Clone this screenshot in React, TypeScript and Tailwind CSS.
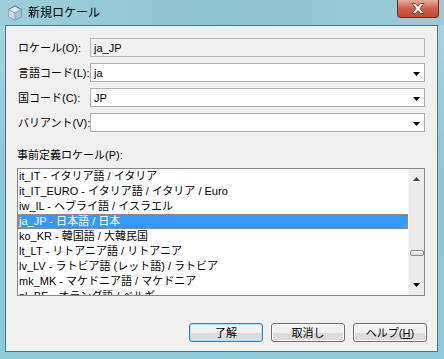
import React from 'react';

const font = "font-['Liberation_Sans','Noto_Sans_CJK_JP',sans-serif]";

const items = [
  'it_IT - イタリア語 / イタリア',
  'it_IT_EURO - イタリア語 / イタリア / Euro',
  'iw_IL - ヘブライ語 / イスラエル',
  'ja_JP - 日本語 / 日本',
  'ko_KR - 韓国語 / 大韓民国',
  'lt_LT - リトアニア語 / リトアニア',
  'lv_LV - ラトビア語 (レット語) / ラトビア',
  'mk_MK - マケドニア語 / マケドニア',
  'nl_BE - オランダ語 / ベルギー',
];

function Arrow() {
  return (
    <svg width="7" height="4" viewBox="0 0 7 4" className="block">
      <path d="M0 0 H7 L3.5 4 Z" fill="#000" />
    </svg>
  );
}

function Field({ value, combo }: { value: string; combo?: boolean }) {
  return (
    <div
      className={`h-[19px] flex items-center border ${combo ? 'bg-white border-[#abadb3]' : 'bg-[#f0f0f0] border-[#b5b5b5]'}`}
    >
      <span className="flex-1 pl-[3px] text-[11px] leading-[14px] text-black">{value}</span>
      {combo && (
        <div className="pr-[4px] pt-[2px]">
          <Arrow />
        </div>
      )}
    </div>
  );
}

function Button({ label, primary }: { label: React.ReactNode; primary?: boolean }) {
  return (
    <div
      className={`w-[74px] h-[19px] rounded-[3px] border flex items-center justify-center text-[11px] leading-[14px] text-black bg-gradient-to-b from-[#f2f2f2] from-50% to-[#dcdcdc] to-50% ${
        primary ? 'border-[#3c7fb1] shadow-[inset_0_0_0_1px_#a7e3f6]' : 'border-[#707070] shadow-[inset_0_0_0_1px_#fcfcfc]'
      }`}
    >
      {label}
    </div>
  );
}

const lbl = 'text-[11px] leading-[14px] whitespace-nowrap';

export default function App() {
  return (
    <div className={`w-[444px] h-[359px] flex flex-col bg-gradient-to-b from-[#a8d6e1] via-[#8fc7d4] to-[#8ccbd8] ${font}`}>
      {/* title bar */}
      <div className="h-[25px] shrink-0 flex items-start bg-gradient-to-r from-[#9ccfdb] via-[#8ec3d0] to-[#9ccbd8]">
        <svg width="16" height="16" viewBox="0 0 16 16" className="ml-[7px] mt-[5px]">
          <path d="M8 1 L14.5 4.5 V11.5 L8 15 L1.5 11.5 V4.5 Z" fill="#dfeaf3" stroke="#5f6f80" strokeWidth="1" />
          <path d="M8 8 L14.5 4.5 V11.5 L8 15 Z" fill="#a9c3d9" />
          <path d="M1.5 4.5 L8 8 V15 L1.5 11.5 Z" fill="#c9dcec" />
          <path d="M1.5 4.5 L8 8 L14.5 4.5" fill="none" stroke="#8a9aab" strokeWidth="1" />
          <path d="M8 8 V15" stroke="#8a9aab" strokeWidth="1" />
        </svg>
        <span className="ml-[5px] mt-[5px] text-[12px] leading-[16px] text-black">新規ロケール</span>
        <div className="ml-auto mr-[5px] w-[42px] h-[18px] rounded-b-[4px] border border-t-0 border-[#6a2a22] bg-gradient-to-b from-[#e9a99c] via-[#d0604c] to-[#c24b33] flex items-center justify-center">
          <svg width="14" height="11" viewBox="0 0 14 11">
            <path d="M1 0.5 H4.5 L7 3.5 L9.5 0.5 H13 L9 5.5 L13 10.5 H9.5 L7 7.5 L4.5 10.5 H1 L5 5.5 Z" fill="#fff" stroke="#5a2a24" strokeWidth="0.8" />
          </svg>
        </div>
      </div>

      {/* client */}
      <div className="ml-[5px] mr-[6px] h-[327px] shrink-0 border border-[#4e7784] bg-[#f0f0f0] px-[12px] pt-[12px] flex flex-col text-black">
        <div className="grid grid-cols-[72px_1fr] gap-y-[6px] items-center">
          <span className={lbl}>ロケール(O):</span>
          <Field value="ja_JP" />
          <span className={lbl}>言語コード(L):</span>
          <Field value="ja" combo />
          <span className={lbl}>国コード(C):</span>
          <Field value="JP" combo />
          <span className={lbl}>バリアント(V):</span>
          <Field value="" combo />
        </div>

        <div className="mt-[16px] h-[15px] text-[11px] leading-[15px] -ml-[1px] whitespace-nowrap">事前定義ロケール(P):</div>

        <div className="mt-[5px] -ml-[1px] h-[128px] shrink-0 border border-[#828790] bg-white flex overflow-hidden">
          <div className="flex-1 flex flex-col overflow-hidden">
            {items.map((t) => {
              const sel = t.startsWith('ja_JP');
              return (
                <div
                  key={t}
                  className={`h-[15px] shrink-0 text-[11px] leading-[13px] whitespace-nowrap ${
                    sel ? 'bg-[#3399ff] text-white border border-dotted border-[#e07a30]' : 'text-black pl-[1px] pt-[1px]'
                  }`}
                >
                  {t}
                </div>
              );
            })}
          </div>
          <div className="w-[16px] bg-[#ececec] border-l border-[#f6f6f6] flex flex-col items-center pt-[8px] pb-[8px]">
            <svg width="7" height="4" viewBox="0 0 7 4">
              <path d="M0 4 H7 L3.5 0 Z" fill="#404040" />
            </svg>
            <div className="mt-[69px] w-[14px] h-[6px] rounded-[2px] border border-[#8a8a8a] bg-gradient-to-b from-[#f8f8f8] to-[#d8d8d8]" />
            <div className="flex-1" />
            <Arrow />
          </div>
        </div>

        <div className="mt-[27px] flex justify-end gap-[8px] -mr-[2px]">
          <Button label="了解" primary />
          <Button label="取消し" />
          <Button
            label={
              <span>
                ヘルプ(<span className="underline">H</span>)
              </span>
            }
          />
        </div>
      </div>
    </div>
  );
}
